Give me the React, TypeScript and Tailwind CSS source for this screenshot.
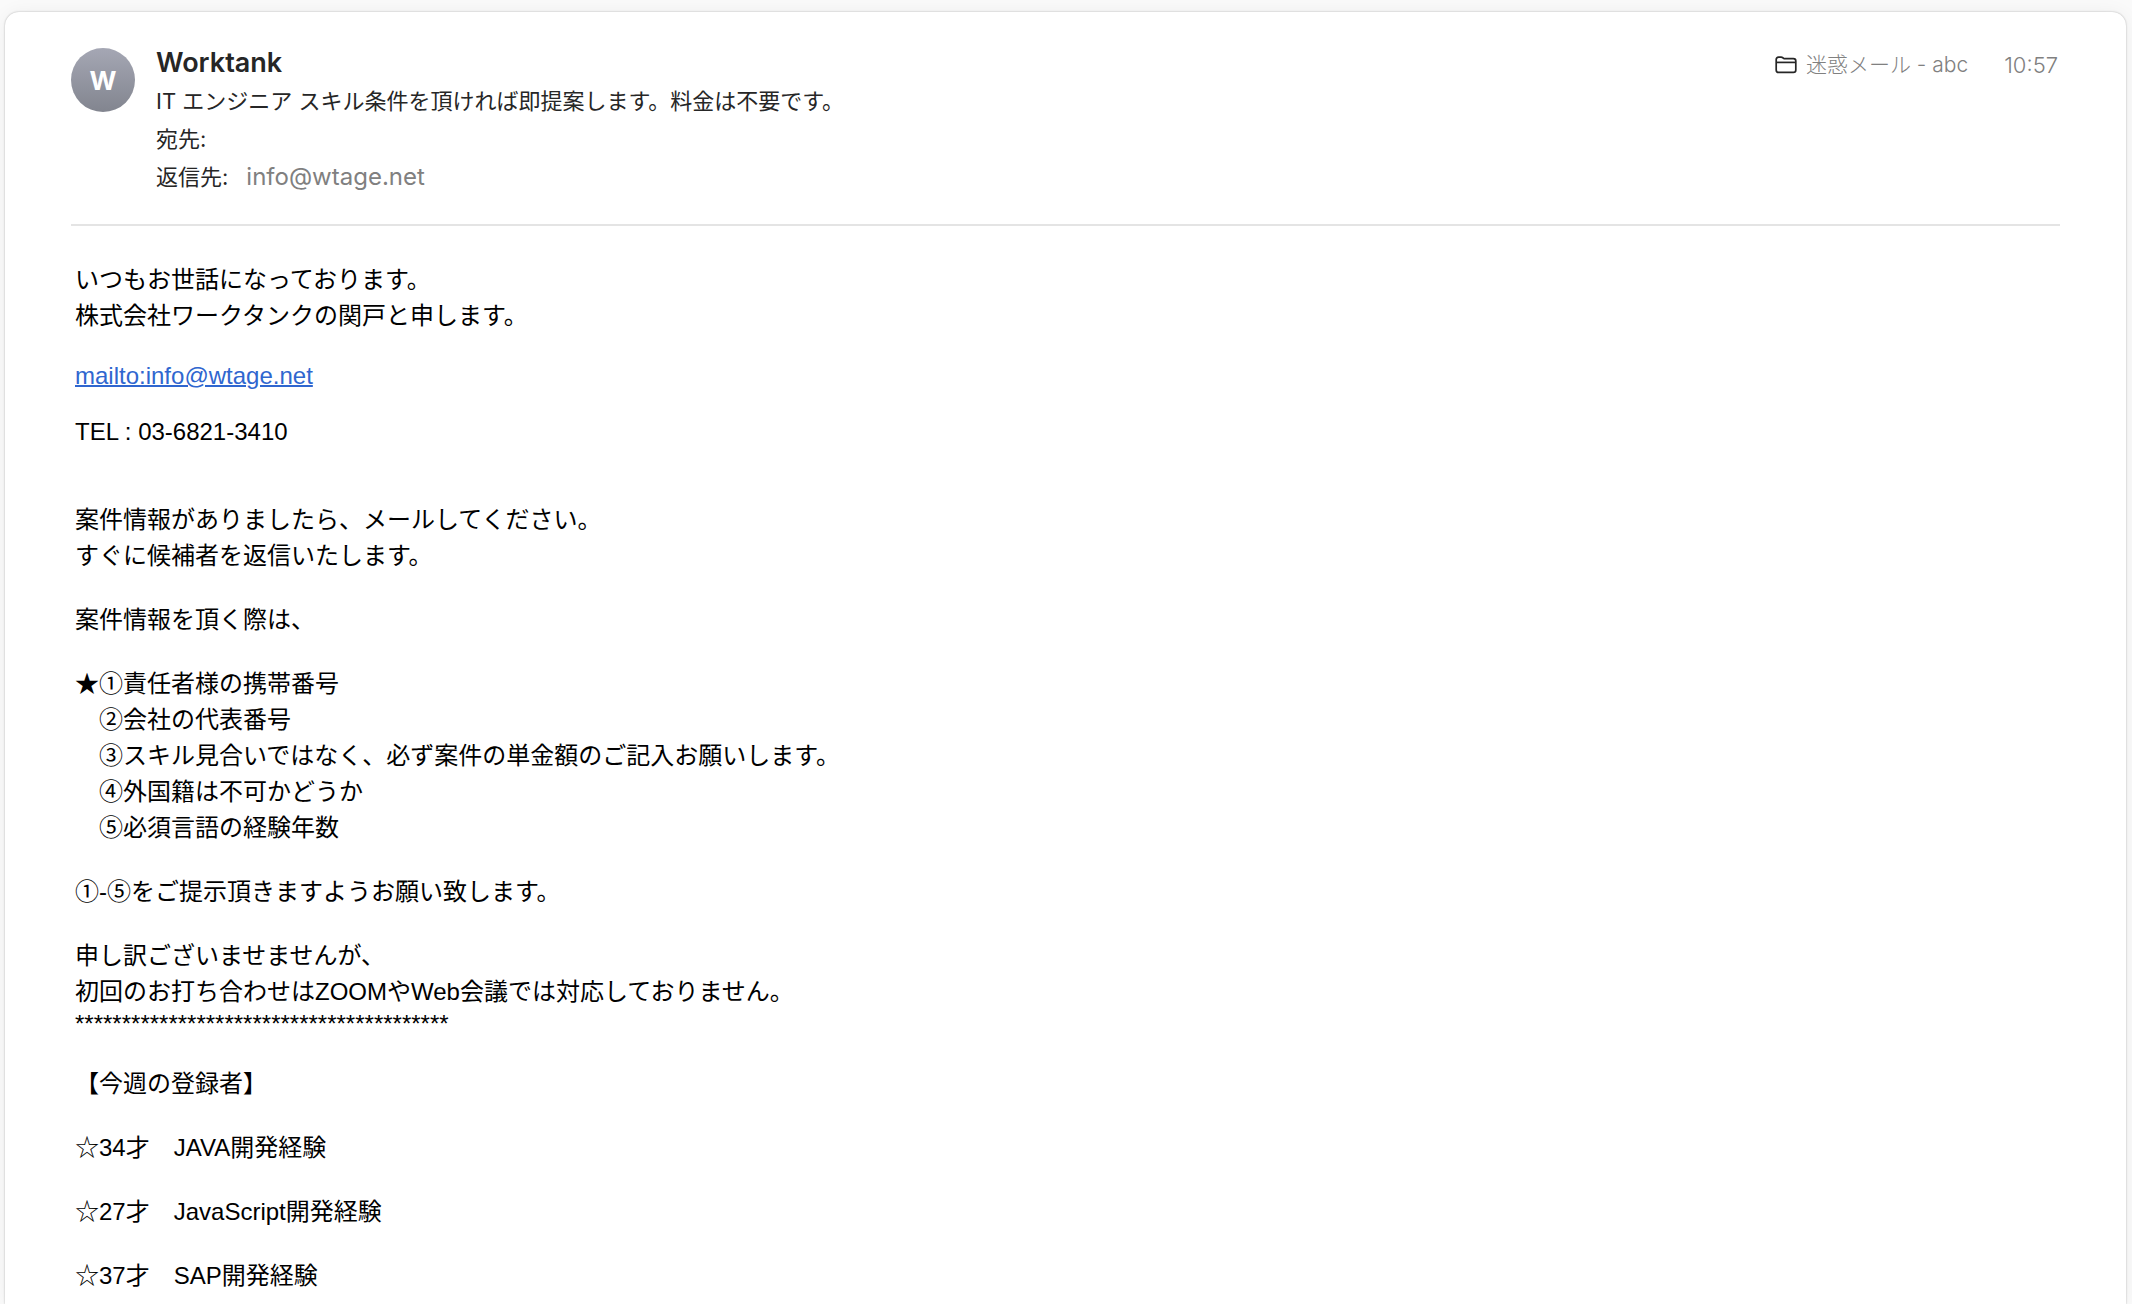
interface MessageSummary {
  sender: string;
  subject: string;
  replyTo: string;
  mailbox: string;
  time: string;
}

const message: MessageSummary = {
  sender: "Worktank",
  subject: "IT エンジニア スキル条件を頂ければ即提案します。料金は不要です。",
  replyTo: "info@wtage.net",
  mailbox: "迷惑メール - abc",
  time: "10:57",
};

const requestParagraphs: string[][] = [
  ["案件情報がありましたら、メールしてください。", "すぐに候補者を返信いたします。"],
  ["案件情報を頂く際は、"],
  [
    "★①責任者様の携帯番号",
    "\u3000②会社の代表番号",
    "\u3000③スキル見合いではなく、必ず案件の単金額のご記入お願いします。",
    "\u3000④外国籍は不可かどうか",
    "\u3000⑤必須言語の経験年数",
  ],
  ["①-⑤をご提示頂きますようお願い致します。"],
];

const candidates = [
  "☆34才\u3000JAVA開発経験",
  "☆27才\u3000JavaScript開発経験",
  "☆37才\u3000SAP開発経験",
];

function FolderIcon() {
  return (
    <svg viewBox="0 0 22 18" className="h-[18px] w-[22px]" fill="none" stroke="#262626" strokeWidth="1.7" aria-hidden="true">
      <path d="M1.2 14V3.6C1.2 2 2 1.2 3.6 1.2h2.5c.8 0 1.2.2 1.8.6l.5.4c.5.3.9.5 1.7.5h8.300c1.600 0 2.400.8 2.400 2.400V14c0 1.600-.8 2.400-2.400 2.400H3.600C2 16.400 1.200 15.600 1.200 14Z" />
      <path d="M1.2 6.400h19.600" />
    </svg>
  );
}

function Paragraph({ lines }: { lines: string[] }) {
  return (
    <p className="leading-9">
      {lines.map((line) => (
        <span key={line} className="block">
          {line}
        </span>
      ))}
    </p>
  );
}

export default function App() {
  return (
    <div className="flex min-h-screen bg-[#fafafa] pl-[5px] pr-[6px] pt-3">
      <article className="min-w-0 flex-1 rounded-t-[14px] bg-white px-[66px] pt-9 shadow-[0_0_2px_rgba(0,0,0,0.3),0_0_18px_rgba(0,0,0,0.05)]">
        {/* Message header */}
        <header className="flex items-start border-b-2 border-[#e4e4e4] pb-7 font-[Inter,'Noto_Sans_CJK_JP',sans-serif] text-[#262626]">
          <div className="flex size-16 shrink-0 items-center justify-center rounded-full bg-linear-to-b from-[#a5a7b4] to-[#82858f] text-[26px] font-bold text-white">
            W
          </div>
          <div className="ml-[21px] min-w-0 flex-1">
            <h1 className="text-[27px] leading-[30px] font-semibold">{message.sender}</h1>
            <h2 className="mt-1 text-[22px] leading-[38px] font-normal">{message.subject}</h2>
            <dl className="text-[22px] leading-[38px]">
              <div className="flex">
                <dt>宛先:</dt>
              </div>
              <div className="flex gap-[18px]">
                <dt>返信先:</dt>
                <dd className="text-[24px] text-[#808080]">{message.replyTo}</dd>
              </div>
            </dl>
          </div>
          <div className="flex h-[34px] shrink-0 items-center pr-0.5 text-[21px] font-light text-[#808080]">
            <FolderIcon />
            <span className="ml-[9px]">{message.mailbox}</span>
            <time className="ml-9 text-[22px]">{message.time}</time>
          </div>
        </header>

        {/* Message body */}
        <div className="space-y-7 px-1 pt-9 font-['Liberation_Sans','Noto_Sans_CJK_JP',sans-serif] text-[24px] text-black">
          <Paragraph lines={["いつもお世話になっております。", "株式会社ワークタンクの関戸と申します。"]} />
          <p className="leading-7">
            <a href="mailto:info@wtage.net" className="text-[#2f66cf] underline decoration-2">
              mailto:info@wtage.net
            </a>
          </p>
          <p className="mb-14 leading-7">TEL : 03-6821-3410</p>
          {requestParagraphs.map((lines) => (
            <Paragraph key={lines[0]} lines={lines} />
          ))}
          <div>
            <Paragraph lines={["申し訳ございませませんが、", "初回のお打ち合わせはZOOMやWeb会議では対応しておりません。"]} />
            <p className="leading-7">{"*".repeat(40)}</p>
          </div>
          <Paragraph lines={["【今週の登録者】"]} />
          {candidates.map((candidate) => (
            <Paragraph key={candidate} lines={[candidate]} />
          ))}
        </div>
      </article>
    </div>
  );
}
